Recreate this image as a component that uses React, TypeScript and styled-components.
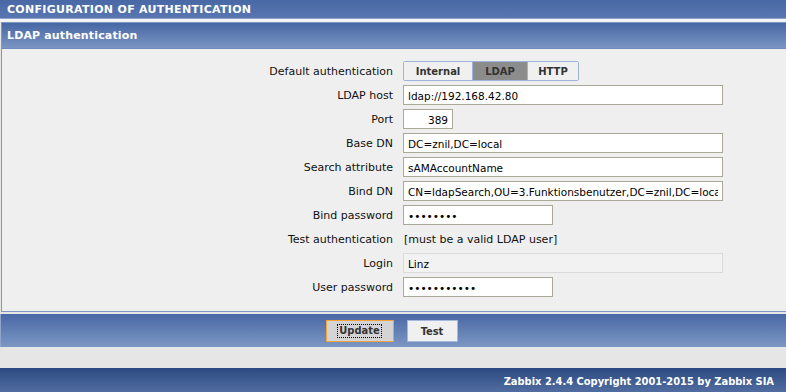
import React from "react";
import styled, { createGlobalStyle } from "styled-components";

const Global = createGlobalStyle`
  html, body {
    margin: 0;
    padding: 0;
    background: #e6e6e6;
    font-family: "DejaVu Sans", Verdana, sans-serif;
    font-size: 11px;
    color: #111;
  }
`;

const Page = styled.div`
  width: 786px;
  height: 392px;
  display: flex;
  flex-direction: column;
  background: #e6e6e6;
  overflow: hidden;
`;

const TopHeader = styled.div`
  height: 18px;
  border-bottom: 1px solid #8ea4cc;
  background: linear-gradient(#4869a6, #5876b0);
  color: #fff;
  font-weight: bold;
  font-size: 11px;
  letter-spacing: 0.3px;
  line-height: 20px;
  padding-left: 7px;
`;

const TopGap = styled.div`
  height: 3px;
  background: #f4f4f4;
`;

const Panel = styled.div`
  margin-left: 1px;
  border: 1px solid #7d96c2;
  border-right: none;
  background: #efefef;
`;

const PanelHeader = styled.div`
  height: 25px;
  border-bottom: 1px solid #6f8bbd;
  background: linear-gradient(#4667a4, #7b95c3);
  color: #fff;
  font-weight: bold;
  font-size: 11px;
  letter-spacing: 0.15px;
  line-height: 26px;
  padding-left: 5px;
`;

const Form = styled.div`
  display: grid;
  grid-template-columns: 391px 1fr;
  column-gap: 10px;
  row-gap: 4px;
  padding: 12px 0 14px;
`;

const Label = styled.div`
  text-align: right;
  line-height: 21px;
  height: 20px;
  white-space: nowrap;
`;

const Field = styled.div`
  display: flex;
  align-items: center;
  height: 20px;
`;

const Segments = styled.div`
  display: flex;
  height: 18px;
  border: 1px solid #9fb3d9;
  border-radius: 2px;
  overflow: hidden;
`;

const Segment = styled.div<{ $active?: boolean; $w: number }>`
  width: ${(p) => p.$w}px;
  text-align: center;
  font-weight: bold;
  font-size: 10px;
  line-height: 19px;
  color: #333;
  background: ${(p) => (p.$active ? "#8c8c8c" : "#f0f0f0")};
  & + & {
    border-left: 1px solid ${(p) => (p.$active ? "#7a7a7a" : "#9fb3d9")};
  }
`;

const Input = styled.input<{ $w: number; $right?: boolean }>`
  box-sizing: border-box;
  width: ${(p) => p.$w}px;
  height: 20px;
  margin: 0;
  padding: 1px 4px 0;
  border: 1px solid #aca899;
  background: #fff;
  font-family: "DejaVu Sans", Verdana, sans-serif;
  font-size: 10.5px;
  color: #000;
  text-align: ${(p) => (p.$right ? "right" : "left")};
  outline: none;
  &:disabled {
    background: #f2f2f2;
    border-color: #dadada;
    color: #000;
  }
`;

const Note = styled.span`
  padding-left: 1px;
  padding-top: 1px;
`;

const ButtonBar = styled.div`
  margin-top: 2px;
  height: 33px;
  border-left: 1px solid #8fa5cc;
  background: linear-gradient(#4868a5, #7d97c4);
  display: flex;
  align-items: center;
  justify-content: center;
  gap: 13px;
  padding-right: 4px;
`;

const Button = styled.button<{ $focus?: boolean; $w: number }>`
  box-sizing: border-box;
  width: ${(p) => p.$w}px;
  height: 22px;
  margin: 0;
  padding: 1px 0 0;
  border: 1px solid ${(p) => (p.$focus ? "#f2a23b" : "#a6b8db")};
  background: ${(p) => (p.$focus ? "#d4d4d4" : "#f0f0f0")};
  color: #333;
  font-family: "DejaVu Sans Condensed", "DejaVu Sans", sans-serif;
  font-weight: bold;
  font-size: 11px;
  display: flex;
  align-items: center;
  justify-content: center;
`;

const FocusRing = styled.span`
  border: 1px dotted #000;
  padding: 0 1px;
  line-height: 12px;
`;

const Filler = styled.div`
  flex: 1;
  background: #e6e6e6;
`;

const Footer = styled.div`
  height: 24px;
  background: linear-gradient(#2d4b82, #506ca0);
  color: #fff;
  font-family: "DejaVu Sans Condensed", "DejaVu Sans", sans-serif;
  font-weight: bold;
  font-size: 11px;
  line-height: 27px;
  text-align: right;
  padding-right: 12px;
`;

type Row = { label: string; field: React.ReactNode };

const rows: Row[] = [
  {
    label: "Default authentication",
    field: (
      <Segments>
        <Segment $w={68}>Internal</Segment>
        <Segment $w={54} $active>
          LDAP
        </Segment>
        <Segment $w={50}>HTTP</Segment>
      </Segments>
    ),
  },
  { label: "LDAP host", field: <Input $w={320} defaultValue="ldap://192.168.42.80" /> },
  { label: "Port", field: <Input $w={50} $right defaultValue="389" /> },
  { label: "Base DN", field: <Input $w={320} defaultValue="DC=znil,DC=local" /> },
  { label: "Search attribute", field: <Input $w={320} defaultValue="sAMAccountName" /> },
  {
    label: "Bind DN",
    field: <Input $w={320} defaultValue="CN=ldapSearch,OU=3.Funktionsbenutzer,DC=znil,DC=local" />,
  },
  { label: "Bind password", field: <Input $w={150} type="password" defaultValue="12345678" /> },
  { label: "Test authentication", field: <Note>[must be a valid LDAP user]</Note> },
  { label: "Login", field: <Input $w={320} disabled defaultValue="Linz" /> },
  { label: "User password", field: <Input $w={150} type="password" defaultValue="12345678901" /> },
];

export default function App() {
  return (
    <Page>
      <Global />
      <TopHeader>CONFIGURATION OF AUTHENTICATION</TopHeader>
      <TopGap />
      <Panel>
        <PanelHeader>LDAP authentication</PanelHeader>
        <Form>
          {rows.map((r) => (
            <React.Fragment key={r.label}>
              <Label>{r.label}</Label>
              <Field>{r.field}</Field>
            </React.Fragment>
          ))}
        </Form>
      </Panel>
      <ButtonBar>
        <Button $w={68} $focus>
          <FocusRing>Update</FocusRing>
        </Button>
        <Button $w={51}>Test</Button>
      </ButtonBar>
      <Filler />
      <Footer>Zabbix 2.4.4 Copyright 2001-2015 by Zabbix SIA</Footer>
    </Page>
  );
}
